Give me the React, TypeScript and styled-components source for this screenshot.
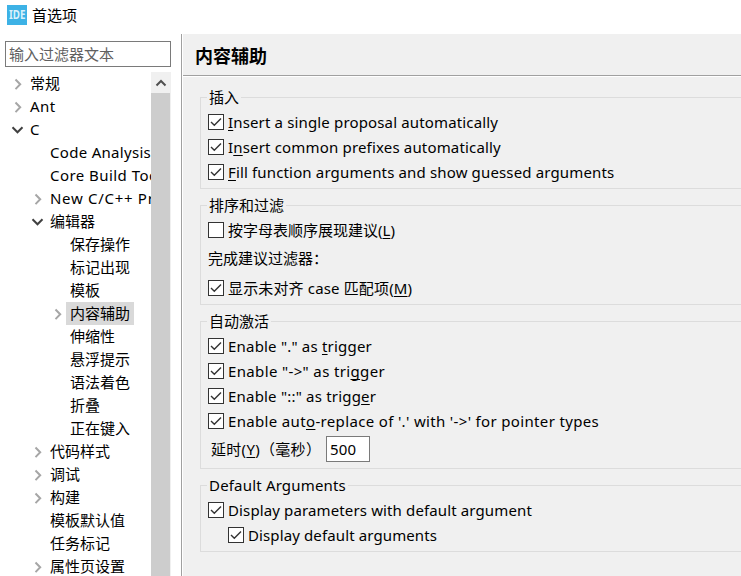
import React from "react";
import styled, { createGlobalStyle } from "styled-components";

const GlobalStyle = createGlobalStyle`
  * { box-sizing: border-box; }
  html, body { margin: 0; padding: 0; overflow: hidden; }
  body {
    background: #fff;
    color: #000;
    font-family: "Noto Sans", "Noto Sans CJK SC", sans-serif;
    font-size: 15px;
    line-height: 20px;
  }
`;

const Window = styled.div`
  display: flex;
  flex-direction: column;
  width: 741px;
  height: 576px;
  overflow: hidden;
`;

const TitleBar = styled.header`
  display: flex;
  align-items: center;
  gap: 5px;
  flex: 0 0 34px;
  padding: 0 0 4px 7px;
`;

const Body = styled.div`
  display: flex;
  flex: 1;
  min-height: 0;
`;

const Sidebar = styled.aside`
  display: flex;
  flex-direction: column;
  flex: 0 0 181px;
  min-width: 0;
  padding: 7px 10px 0 5px;
`;

const Filter = styled.div`
  flex: 0 0 26px;
  border: 1px solid #7a7a7a;
  padding: 2px 3px;
  color: #606060;
  white-space: nowrap;
`;

const TreeArea = styled.div`
  display: flex;
  flex: 1;
  min-height: 0;
  padding-top: 5px;
`;

const Tree = styled.div`
  flex: 1;
  min-width: 0;
  overflow: hidden;
`;

const TreeRow = styled.div<{ $level: number }>`
  display: flex;
  align-items: center;
  height: 23px;
  padding-left: ${(p) => 6 + p.$level * 20}px;
  white-space: nowrap;
`;

const ArrowSlot = styled.span`
  display: flex;
  flex: 0 0 15px;
  height: 12px;
`;

const TreeText = styled.span<{ $selected?: boolean; $spacing?: number }>`
  height: 23px;
  line-height: 22px;
  padding: 0 4px;
  letter-spacing: ${(p) => p.$spacing ?? 0}px;
  background: ${(p) => (p.$selected ? "#d9d9d9" : "transparent")};
`;

const Scrollbar = styled.div`
  display: flex;
  flex-direction: column;
  flex: 0 0 20px;
  background: #f0f0f0;
`;

const ScrollButton = styled.div`
  display: flex;
  align-items: center;
  justify-content: center;
  flex: 0 0 21px;
`;

const Thumb = styled.div`
  flex: 1;
  margin-right: 1px;
  background: #cdcdcd;
`;

const Main = styled.main`
  display: flex;
  flex-direction: column;
  flex: 1;
  min-width: 0;
  border-left: 1px solid #a0a0a0;
  box-shadow: inset 1px 0 #fff;
  background: #f0f0f0;
`;

const Heading = styled.h1`
  flex: 0 0 43px;
  margin: 0 0 0 1px;
  padding: 2px 0 0 12px;
  border-bottom: 1px solid #fff;
  box-shadow: inset 0 -1px #a0a0a0;
  font-size: 18px;
  line-height: 40px;
  font-weight: 700;
`;

const Groups = styled.div`
  display: flex;
  flex-direction: column;
  gap: 16px;
  padding: 20px 0 0 18px;
`;

const Group = styled.section<{ $height: number }>`
  height: ${(p) => p.$height}px;
  border: 1px solid #dcdcdc;
  border-right: 0;
  padding-left: 7px;
`;

const Legend = styled.h2<{ $spacing?: number }>`
  width: fit-content;
  height: 17px;
  margin: -10px 0 4px -1px;
  padding: 0 2px;
  background: #f0f0f0;
  font-size: 15px;
  line-height: 19px;
  font-weight: 400;
  letter-spacing: ${(p) => p.$spacing ?? 0}px;
`;

const Option = styled.div<{ $indent?: boolean }>`
  display: flex;
  align-items: center;
  gap: 3px;
  height: 25px;
  padding-left: ${(p) => (p.$indent ? 20 : 0)}px;
  white-space: nowrap;
`;

const Box = styled.span`
  display: flex;
  flex: 0 0 16px;
  height: 16px;
  border: 1px solid #333;
  background: #fff;
`;

const OptionText = styled.span<{ $spacing?: number }>`
  padding-left: 1px;
  letter-spacing: ${(p) => p.$spacing ?? 0}px;
`;

const Key = styled.span`
  text-decoration: underline;
  text-decoration-thickness: 1px;
  text-underline-offset: 2px;
  text-decoration-skip-ink: none;
`;

const Caption = styled.div`
  height: 33px;
  line-height: 33px;
`;

const DelayRow = styled.div`
  display: flex;
  align-items: center;
  height: 26px;
  margin-top: 3px;
  padding-left: 3px;
`;

const DelayLabel = styled.span`
  flex: 0 0 115px;
  white-space: nowrap;
  letter-spacing: 0.3px;
`;

const NumberField = styled.div`
  width: 44px;
  height: 26px;
  border: 1px solid #7a7a7a;
  padding: 2px 3px;
  background: #fff;
  letter-spacing: 0.2px;
`;

const LogoText = styled.text`
  font: 700 11.5px "Noto Sans", sans-serif;
  fill: #d9f1fb;
`;

const Logo = () => (
  <svg width="20" height="20">
    <rect width="20" height="20" fill="#3db2e6" />
    <LogoText x="2" y="14" textLength="16.5" lengthAdjust="spacingAndGlyphs">IDE</LogoText>
  </svg>
);

const Arrow = ({ open }: { open: boolean }) => (
  <svg width="15" height="12" fill="none" strokeWidth="2">
    {open ? <path d="M1.5 3.3 6.5 8.3 11.5 3.3" stroke="#404040" /> : <path d="M4.5 1.5 9.2 6.3 4.5 11.1" stroke="#a6a6a6" />}
  </svg>
);

interface CheckProps {
  off?: boolean;
  indent?: boolean;
  spacing?: number;
  children: React.ReactNode;
}

const Check = ({ off, indent, spacing, children }: CheckProps) => (
  <Option $indent={indent}>
    <Box>
      {!off && (
        <svg width="14" height="14" fill="none" stroke="#333" strokeWidth="1.4">
          <path d="M2 7 5.3 10.3 12 3.5" />
        </svg>
      )}
    </Box>
    <OptionText $spacing={spacing}>{children}</OptionText>
  </Option>
);

interface Node {
  text: string;
  level: number;
  state?: "open" | "closed";
  selected?: boolean;
  spacing?: number;
}

const nodes: Node[] = [
  { text: "常规", level: 0, state: "closed" },
  { text: "Ant", level: 0, state: "closed", spacing: 0.4 },
  { text: "C", level: 0, state: "open" },
  { text: "Code Analysis", level: 1, spacing: 0.3 },
  { text: "Core Build Toolchains", level: 1, spacing: 0.45 },
  { text: "New C/C++ Project Wizard", level: 1, state: "closed", spacing: 0.7 },
  { text: "编辑器", level: 1, state: "open" },
  { text: "保存操作", level: 2 },
  { text: "标记出现", level: 2 },
  { text: "模板", level: 2 },
  { text: "内容辅助", level: 2, state: "closed", selected: true },
  { text: "伸缩性", level: 2 },
  { text: "悬浮提示", level: 2 },
  { text: "语法着色", level: 2 },
  { text: "折叠", level: 2 },
  { text: "正在键入", level: 2 },
  { text: "代码样式", level: 1, state: "closed" },
  { text: "调试", level: 1, state: "closed" },
  { text: "构建", level: 1, state: "closed" },
  { text: "模板默认值", level: 1 },
  { text: "任务标记", level: 1 },
  { text: "属性页设置", level: 1, state: "closed" },
];

export default function App() {
  return (
    <Window>
      <GlobalStyle />
      <TitleBar>
        <Logo />
        首选项
      </TitleBar>
      <Body>
        <Sidebar>
          <Filter>输入过滤器文本</Filter>
          <TreeArea>
            <Tree>
              {nodes.map((n) => (
                <TreeRow key={n.text} $level={n.level}>
                  <ArrowSlot>{n.state && <Arrow open={n.state === "open"} />}</ArrowSlot>
                  <TreeText $selected={n.selected} $spacing={n.spacing}>{n.text}</TreeText>
                </TreeRow>
              ))}
            </Tree>
            <Scrollbar>
              <ScrollButton>
                <svg width="12" height="8" fill="none" stroke="#505050" strokeWidth="2">
                  <path d="M1.5 6.5 6 2 10.5 6.5" />
                </svg>
              </ScrollButton>
              <Thumb />
            </Scrollbar>
          </TreeArea>
        </Sidebar>
        <Main>
          <Heading>内容辅助</Heading>
          <Groups>
            <Group $height={92}>
              <Legend>插入</Legend>
              <Check spacing={0.15}><Key>I</Key>nsert a single proposal automatically</Check>
              <Check spacing={0.17}>I<Key>n</Key>sert common prefixes automatically</Check>
              <Check spacing={0.15}><Key>F</Key>ill function arguments and show guessed arguments</Check>
            </Group>
            <Group $height={100}>
              <Legend>排序和过滤</Legend>
              <Check off>按字母表顺序展现建议(<Key>L</Key>)</Check>
              <Caption>完成建议过滤器：</Caption>
              <Check spacing={0.15}>显示未对齐 case 匹配项(<Key>M</Key>)</Check>
            </Group>
            <Group $height={148}>
              <Legend>自动激活</Legend>
              <Check spacing={0.2}>Enable "." as <Key>t</Key>rigger</Check>
              <Check spacing={0.36}>Enable "-&gt;" as tri<Key>g</Key>ger</Check>
              <Check spacing={0.2}>Enable "::" as trigg<Key>e</Key>r</Check>
              <Check spacing={0.34}>Enable aut<Key>o</Key>-replace of '.' with '-&gt;' for pointer types</Check>
              <DelayRow>
                <DelayLabel>延时(<Key>Y</Key>)（毫秒）</DelayLabel>
                <NumberField>500</NumberField>
              </DelayRow>
            </Group>
            <Group $height={67}>
              <Legend $spacing={0.18}>Default Arguments</Legend>
              <Check spacing={0.13}>Display parameters with default argument</Check>
              <Check indent spacing={0.12}>Display default arguments</Check>
            </Group>
          </Groups>
        </Main>
      </Body>
    </Window>
  );
}
